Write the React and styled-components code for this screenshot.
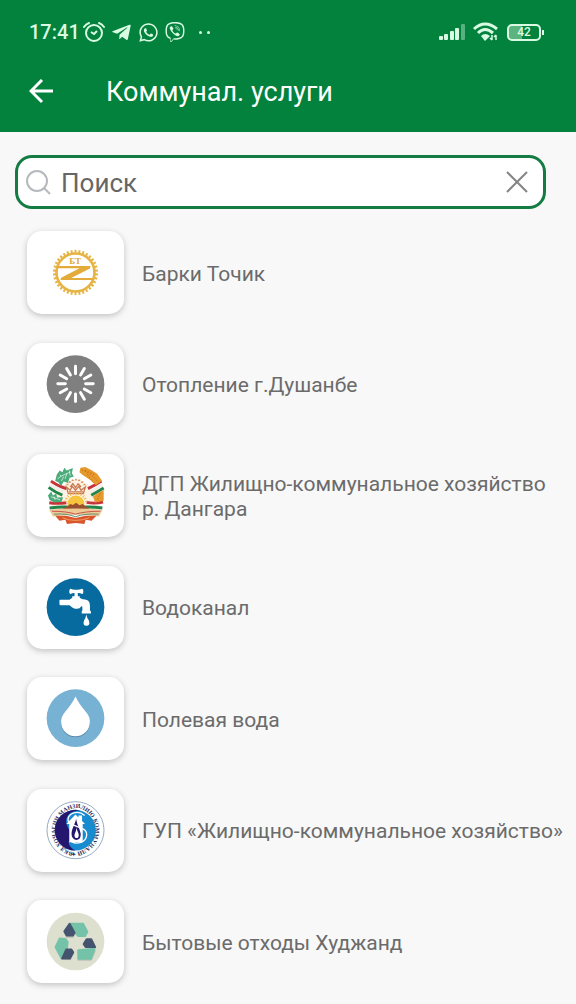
import React, { useState } from "react";
import styled, { createGlobalStyle } from "styled-components";
import { FaTelegramPlane, FaWhatsapp, FaViber } from "react-icons/fa";

const angles = (count) =>
  Array.from({ length: count }, (_, i) => (360 / count) * i);

const BarkiLogo = () => (
  <Logo viewBox="76 52 180 180" aria-hidden="true">
    <g fill="none" stroke="#e6b345">
      <circle cx="166" cy="142" r="58" strokeWidth="8" />
      {angles(34).map((a) => (
        <path
          key={a}
          d="M166 82v-9"
          strokeWidth="6"
          transform={`rotate(${a} 166 142)`}
        />
      ))}
    </g>
    <path
      d="M112 122H212L210 130L153 159H218V165H120L122 158L178 129H112Z"
      fill="#e3ac3a"
    />
    <text
      x="165"
      y="116"
      textAnchor="middle"
      fontFamily="Liberation Serif, serif"
      fontWeight="700"
      fontSize="28"
      fill="#dfa93f"
    >
      БТ
    </text>
  </Logo>
);

const HeatingLogo = () => (
  <Logo viewBox="76 52 180 180" aria-hidden="true">
    <circle cx="166" cy="141" r="88" fill="#7f7f7f" />
    {angles(12).map((a) => (
      <path
        key={a}
        d="M166 109V86"
        stroke="#fff"
        strokeWidth="9"
        strokeLinecap="round"
        transform={`rotate(${a} 166 140)`}
      />
    ))}
  </Logo>
);

const EmblemLogo = () => (
  <Logo viewBox="76 52 180 180" aria-hidden="true">
    <path d="M96 150L130 108Q166 88 204 108L238 150L240 190H92Z" fill="#fdf3e2" />
    <g fill="none" strokeWidth="9">
      <path d="M91 98Q110 112 138 121" stroke="#c8343c" />
      <path d="M87 107Q106 122 132 131" stroke="#f4eee8" />
      <path d="M84 117Q104 132 126 141" stroke="#23854c" />
      <path d="M245 98Q224 112 204 121" stroke="#c8343c" />
      <path d="M249 109Q230 122 210 131" stroke="#f4eee8" />
      <path d="M252 119Q234 130 214 141" stroke="#23854c" />
      <path d="M86 164Q108 168 138 164" stroke="#c8343c" />
      <path d="M87 180Q116 176 140 177" stroke="#23854c" />
      <path d="M250 162Q224 168 200 163" stroke="#c8343c" />
      <path d="M248 180Q220 176 196 177" stroke="#23854c" />
    </g>
    <g fill="#4bab7a">
      <path d="M104 98L109 78L118 66L126 71L132 57L139 66L158 58L155 74L161 84L148 88L143 104L130 99L122 113L113 101Z" />
      <path d="M82 142L92 130L97 142L107 136L110 148L128 147L124 161L102 163L87 156Z" />
    </g>
    <path
      d="M111 91L124 82L151 70M123 98L130 84M134 91L140 75M119 79L122 84M147 66L150 82M91 146L119 155M100 145L104 155"
      fill="none"
      stroke="#fff"
      strokeWidth="2"
    />
    <g fill="#e69a2b">
      <path d="M181 57L196 55L214 64L232 76L247 97L228 111L211 95L190 81L178 71Z" />
      <path d="M252 125L252 158L226 163L219 145L235 134Z" />
    </g>
    <g stroke="#c2661e" strokeWidth="3" strokeDasharray="4 5" fill="none">
      <path d="M185 64Q214 75 232 97M195 65L224 78M202 78L220 102M242 134L231 157" />
    </g>
    <path
      d="M144 136L138 116L150 126L156 114L166 126L176 114L183 126L196 116L190 136ZM150 116L158 106L166 118L174 106L183 116M146 131H189"
      fill="none"
      stroke="#c97852"
      strokeWidth="4"
    />
    <path
      d="M138 111l3-5 3 5-5-3h6zM145 103l3-5 3 5-5-3h6zM154 98l3-5 3 5-5-3h6zM164 96l3-5 3 5-5-3h6zM174 98l3-5 3 5-5-3h6zM183 103l3-5 3 5-5-3h6zM190 111l3-5 3 5-5-3h6z"
      fill="#d98c54"
      stroke="#d98c54"
    />
    <circle cx="167" cy="168" r="26" fill="#f7c43d" />
    <g stroke="#f0b445" strokeWidth="3">
      {[-75, -60, -45, -30, -15, 0, 15, 30, 45, 60, 75].map((a) => (
        <path key={a} d="M167 139V131" transform={`rotate(${a} 167 168)`} />
      ))}
    </g>
    <path
      d="M123 185L140 175L151 168L158 171L168 164L178 172L188 168L211 185Z"
      fill="#98502e"
    />
    <path d="M86 186Q166 178 248 186L238 206Q166 196 97 206Z" fill="#edca96" />
    <path
      d="M94 190Q140 190 166 199Q195 190 242 190"
      fill="none"
      stroke="#c8544a"
      strokeWidth="3"
    />
    <path
      d="M100 199Q141 196 166 207Q194 196 236 199"
      fill="none"
      stroke="#5b9070"
      strokeWidth="3"
    />
    <path
      d="M104 204L138 204L166 211L196 204L230 204L215 219L197 216L193 229L167 226L140 229L135 216L117 219Z"
      fill="#da552d"
    />
    <path
      d="M126 210L145 216L166 218L188 216L208 210"
      fill="none"
      stroke="#efa05a"
      strokeWidth="3"
    />
  </Logo>
);

const TapLogo = () => (
  <Logo viewBox="76 52 180 180" aria-hidden="true">
    <circle cx="166" cy="141" r="88" fill="#086b9f" />
    <g fill="#fff">
      <path d="M151 85Q147 85 147 93Q147 101 151 101Q158 97 163 98V108H156V113Q151 115 148 118H119Q117 118 117 122V131Q117 135 121 135H148Q158 146 171 146Q179 146 184 138Q187 137 187 142V151Q185 152 185 155V160H213V155Q213 152 210 151V136Q210 117 190 117H187Q184 114 179 113V108H173V98Q179 97 186 101Q190 101 190 93Q190 85 186 85Q178 89 168 88Q159 89 151 85Z" />
      <path d="M199 163Q201 174 207 182Q212 198 199 198Q187 198 192 182Q197 175 199 163Z" />
    </g>
  </Logo>
);

const DropLogo = () => (
  <Logo viewBox="76 50 180 180" aria-hidden="true">
    <circle cx="166" cy="139" r="88" fill="#77b1d3" />
    <path
      d="M166 76Q156 98 134 123Q122 137 122 152C122 178 141 197 166 197S210 178 210 152Q210 137 198 123Q176 98 166 76Z"
      fill="#5688a7"
    />
    <path
      d="M166 73Q156 95 134 120Q122 134 122 149C122 175 141 194 166 194S210 175 210 149Q210 134 198 120Q176 95 166 73Z"
      fill="#fff"
    />
  </Logo>
);

const HousingLogo = () => (
  <Logo viewBox="76 52 180 180" aria-hidden="true">
    <defs>
      <path id="ring" d="M158 209A69 69 0 0 1 174 73A69 69 0 0 1 158 209" />
    </defs>
    <circle cx="166" cy="141" r="87" fill="#fff" stroke="#5f7fa5" strokeWidth="2" />
    <circle cx="166" cy="141" r="62" fill="#168bd0" />
    <path
      d="M180 81A62 62 0 1 0 166 203C151 196 143 184 146 174H156V150C146 140 135 126 138 108C142 91 158 80 180 81Z"
      fill="#24166f"
    />
    <path
      d="M138 122L166 93L175 102V96H186V113L195 122H188V178H147V122Z"
      fill="#fff"
    />
    <path d="M168 106C165 122 154 136 154 152C154 176 182 177 182 155C182 141 171 128 168 106Z" fill="#24166f" />
    <path d="M169 132C169 146 163 149 163 157C163 168 176 167 176 157C176 148 171 146 169 132Z" fill="#fff" />
    <path
      d="M194 96C174 78 143 88 143 110C143 133 203 126 200 156C198 179 170 186 154 176"
      fill="none"
      stroke="#fff"
      strokeWidth="4"
    />
    <text
      fontFamily="Liberation Serif, serif"
      fontSize="18"
      fontWeight="700"
      fill="#26305e"
    >
      <textPath href="#ring">ВКД ХОҶАГИИ МАНЗИЛИЮ КОММУНАЛӢ ✦</textPath>
    </text>
  </Logo>
);

const RecycleLogo = () => (
  <Logo viewBox="76 48 180 180" aria-hidden="true">
    <circle cx="166" cy="138" r="88" fill="#dddfcf" />
    <g fill="#bfc4b6" stroke="#bfc4b6" strokeWidth="6" strokeLinejoin="round">
      <path d="M148 87L132 109L140 124H158L163 113Z" />
      <path d="M175 194L173 167H225L213 194Z" />
      <path d="M123 190L137 164H153L159 174L149 192Z" />
    </g>
    <g strokeWidth="6" strokeLinejoin="round">
      <path d="M150 84H189L202 108L195 121H174L164 110Z" fill="#74c3a9" stroke="#74c3a9" />
      <path d="M148 84L132 107L139 120H158L163 111Z" fill="#44546f" stroke="#44546f" />
      <path d="M118 129L135 130L142 139L140 158L122 187L105 155Z" fill="#74c3a9" stroke="#74c3a9" />
      <path d="M138 162H153L159 171L149 190H125Z" fill="#44546f" stroke="#44546f" />
      <path d="M175 165L224 160L213 191H175Z" fill="#74c3a9" stroke="#74c3a9" />
      <path d="M200 131H214L226 155H197L191 146Z" fill="#44546f" stroke="#44546f" />
    </g>
  </Logo>
);

const services = [
  { title: "Барки Точик", icon: <BarkiLogo /> },
  { title: "Отопление г.Душанбе", icon: <HeatingLogo /> },
  {
    title: "ДГП Жилищно-коммунальное хозяйство р. Дангара",
    icon: <EmblemLogo />,
  },
  { title: "Водоканал", icon: <TapLogo /> },
  { title: "Полевая вода", icon: <DropLogo /> },
  { title: "ГУП «Жилищно-коммунальное хозяйство»", icon: <HousingLogo /> },
  { title: "Бытовые отходы Худжанд", icon: <RecycleLogo /> },
];

const StatusBar = () => (
  <StatusRow>
    <StatusGroup $gap={6}>
      <StatusGroup $gap={3}>
        <Clock>17:41</Clock>
        <svg width="22" height="22" viewBox="0 0 22 22" fill="none" stroke="currentColor">
          <circle cx="11" cy="12" r="8" strokeWidth="2" />
          <path d="M1 6Q3 3 6 2M21 6Q19 3 16 2" strokeWidth="2" strokeLinecap="round" />
          <path d="M8 11L11 13L14 10" strokeWidth="2" />
        </svg>
      </StatusGroup>
      <FaTelegramPlane size={21} />
      <FaWhatsapp size={21} />
      <FaViber size={20} />
      <Dots>
        <span />
        <span />
      </Dots>
    </StatusGroup>
    <StatusGroup $gap={8}>
      <svg width="26" height="18" viewBox="0 0 26 18" fill="currentColor">
        <rect x="0" y="13" width="4" height="4" rx="1" />
        <rect x="5" y="11" width="4" height="6" rx="1" />
        <rect x="11" y="8" width="4" height="9" rx="1" />
        <rect x="16" y="5" width="4" height="12" rx="1" />
        <rect x="22" y="1" width="4" height="16" rx="1" opacity="0.4" />
      </svg>
      <svg width="26" height="20" viewBox="0 0 26 20" fill="none" stroke="currentColor" strokeWidth="3">
        <path d="M1 7Q12 -3 24 7M5 11Q12 4 20 11" />
        <path d="M8 14Q12 10 17 14L12 19Z" fill="currentColor" stroke="none" />
        <path d="M19 13V18M17 16L19 18M23 18V13M21 15L23 13" strokeWidth="1.5" />
      </svg>
      <Battery>
        <span>42</span>
      </Battery>
    </StatusGroup>
  </StatusRow>
);

const App = () => {
  const [query, setQuery] = useState("");
  const found = services.filter((service) =>
    service.title.toLowerCase().includes(query.toLowerCase())
  );

  return (
    <Page>
      <GlobalStyle />
      <Header>
        <StatusBar />
        <TitleRow>
          <IconButton type="button" aria-label="Назад">
            <svg width="26" height="26" viewBox="0 0 26 26" fill="none" stroke="currentColor" strokeWidth="3">
              <path d="M24 12H3M13 1L2 12L13 23" />
            </svg>
          </IconButton>
          <Title>Коммунал. услуги</Title>
        </TitleRow>
      </Header>
      <SearchBox>
        <svg width="26" height="26" viewBox="0 0 26 26" fill="none" stroke="#b5b9bd" strokeWidth="2">
          <circle cx="11" cy="12" r="10" />
          <path d="M18 19L24 25" />
        </svg>
        <SearchInput
          aria-label="Поиск"
          placeholder="Поиск"
          value={query}
          onChange={(e) => setQuery(e.target.value)}
        />
        <IconButton type="button" aria-label="Очистить" onClick={() => setQuery("")}>
          <svg width="24" height="24" viewBox="0 0 24 24" fill="none" stroke="#858585" strokeWidth="2">
            <path d="M2 2L22 22M22 2L2 22" />
          </svg>
        </IconButton>
      </SearchBox>
      <ServiceList>
        {found.map((service) => (
          <li key={service.title}>
            <ServiceLink href="#">
              <Card>{service.icon}</Card>
              <ServiceName>{service.title}</ServiceName>
            </ServiceLink>
          </li>
        ))}
      </ServiceList>
    </Page>
  );
};

export default App;

const GlobalStyle = createGlobalStyle`
  * {
    box-sizing: border-box;
  }
  body {
    margin: 0;
    background: #f8f8f8;
    font-family: Roboto, "Noto Sans", sans-serif;
  }
  svg {
    display: block;
    flex-shrink: 0;
  }
`;

const Page = styled.div`
  min-height: 100vh;
  display: flex;
  flex-direction: column;
`;

const Header = styled.header`
  padding: 20px 35px 24px 29px;
  background: #02823c;
  color: #fff;
`;

const StatusRow = styled.div`
  height: 24px;
  display: flex;
  justify-content: space-between;
  align-items: center;
  color: #d9fbe3;
`;

const StatusGroup = styled.div`
  display: flex;
  align-items: center;
  gap: ${({ $gap }) => $gap}px;
`;

const Clock = styled.span`
  font-size: 20px;
  font-weight: 500;
`;

const Dots = styled.span`
  display: flex;
  gap: 5px;
  padding-left: 8px;

  span {
    width: 3px;
    height: 3px;
    border-radius: 50%;
    background: currentColor;
  }
`;

const Battery = styled.div`
  position: relative;
  width: 34px;
  height: 17px;
  display: flex;
  align-items: center;
  justify-content: center;
  border: 2px solid currentColor;
  border-radius: 5px;
  background: linear-gradient(90deg, #5cb37f 42%, transparent 42%);
  font-size: 12px;
  font-weight: 500;

  &::after {
    content: "";
    position: absolute;
    right: -5px;
    width: 2px;
    height: 5px;
    background: currentColor;
  }
`;

const TitleRow = styled.div`
  height: 64px;
  padding-top: 31px;
  display: flex;
  align-items: center;
  gap: 51px;
`;

const Title = styled.h1`
  margin: 0;
  font-size: 27px;
  font-weight: 400;
  line-height: 32px;
`;

const IconButton = styled.button`
  padding: 0;
  border: none;
  background: none;
  color: inherit;
  cursor: pointer;
`;

const SearchBox = styled.div`
  height: 54px;
  margin: 23px 30px 0 15px;
  padding: 0 14px 0 8px;
  display: flex;
  align-items: center;
  gap: 9px;
  border: 3px solid #147c43;
  border-radius: 17px;
  background: #fff;
`;

const SearchInput = styled.input`
  flex: 1;
  min-width: 0;
  padding: 2px 0 0;
  border: none;
  outline: none;
  background: none;
  color: #666;
  font-family: inherit;
  font-size: 26px;
  line-height: 32px;

  &::placeholder {
    color: #666;
    opacity: 1;
  }
`;

const ServiceList = styled.ul`
  flex: 1;
  margin: 0;
  padding: 22px 8px 21px 27px;
  display: flex;
  flex-direction: column;
  justify-content: space-between;
  gap: 28px;
  list-style: none;
`;

const ServiceLink = styled.a`
  display: flex;
  align-items: center;
  gap: 18px;
  color: #6b6b6b;
  text-decoration: none;
`;

const Card = styled.span`
  width: 97px;
  height: 83px;
  flex-shrink: 0;
  display: flex;
  align-items: center;
  justify-content: center;
  border-radius: 15px;
  background: #fff;
  box-shadow: 0 2px 6px rgba(0, 0, 0, 0.22);
`;

const Logo = styled.svg`
  width: 59px;
  height: 59px;
`;

const ServiceName = styled.span`
  padding-top: 3px;
  font-size: 21px;
  line-height: 25px;
`;
